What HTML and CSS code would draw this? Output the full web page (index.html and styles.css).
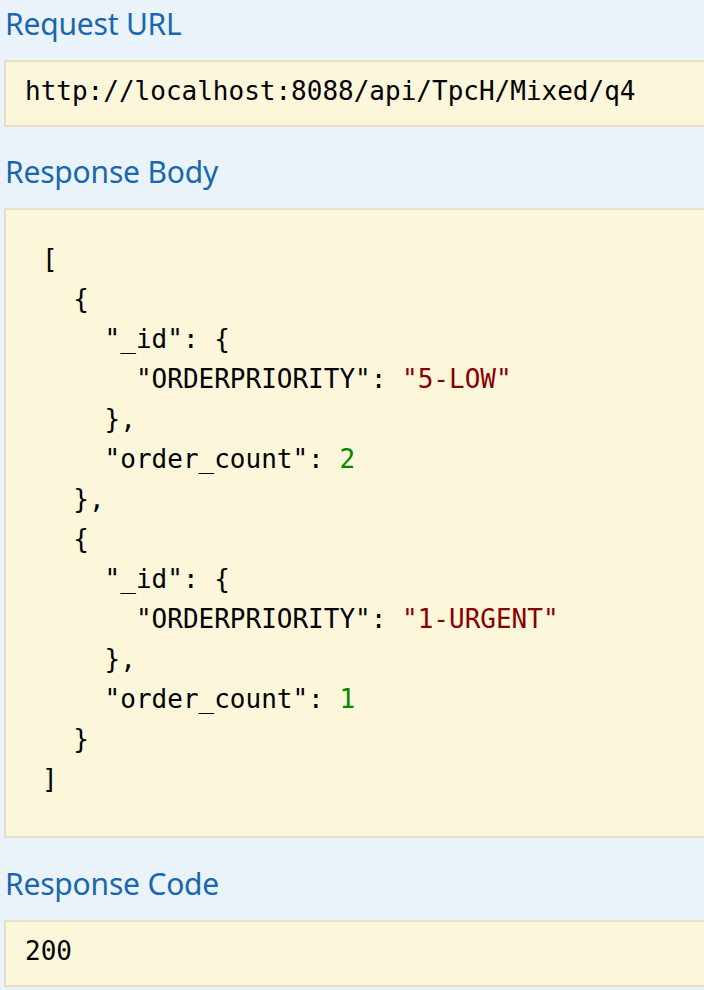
FILE: index.html
```html
<!DOCTYPE html>
<html>
<head>
<meta charset="utf-8">
<link rel="stylesheet" href="styles.css">
</head>
<body>
<div class="panel">
  <h4 class="title">Request URL</h4>
  <div class="block url"><pre class="code">http://localhost:8088/api/TpcH/Mixed/q4</pre></div>

  <h4 class="title">Response Body</h4>
  <div class="block body"><pre class="code">[
  {
    "_id": {
      "ORDERPRIORITY": <span class="str">"5-LOW"</span>
    },
    "order_count": <span class="num">2</span>
  },
  {
    "_id": {
      "ORDERPRIORITY": <span class="str">"1-URGENT"</span>
    },
    "order_count": <span class="num">1</span>
  }
]</pre></div>

  <h4 class="title">Response Code</h4>
  <div class="block rcode"><pre class="code">200</pre></div>
</div>
</body>
</html>
```

FILE: styles.css
```css
html, body {
  margin: 0;
  padding: 0;
  background: #ebf3fa;
  overflow: hidden;
}
.panel {
  width: 760px;
  padding: 4px 0 0 4px;
  display: flex;
  flex-direction: column;
}
.title {
  margin: 0;
  font-family: "Noto Sans", "Open Sans", sans-serif;
  font-weight: normal;
  font-size: 30px;
  line-height: 40px;
  height: 40px;
  color: #1768b1;
  padding-left: 1px;
  letter-spacing: -0.2px;
}
.block {
  background: #fcf6db;
  border: 2px solid #e5e0c4;
  margin-top: 16px;
}
.code {
  margin: 0;
  font-family: "DejaVu Sans Mono", monospace;
  font-size: 26px;
  line-height: 40px;
  color: #000;
  white-space: pre;
}
.url {
  padding: 9px 20px 14px 19px;
  margin-bottom: 25px;
}
.body {
  padding: 29px 20px 37px 36px;
  margin-bottom: 26px;
}
.rcode {
  padding: 9px 20px 14px 19px;
}
.str { color: #880000; }
.num { color: #008800; }
```
